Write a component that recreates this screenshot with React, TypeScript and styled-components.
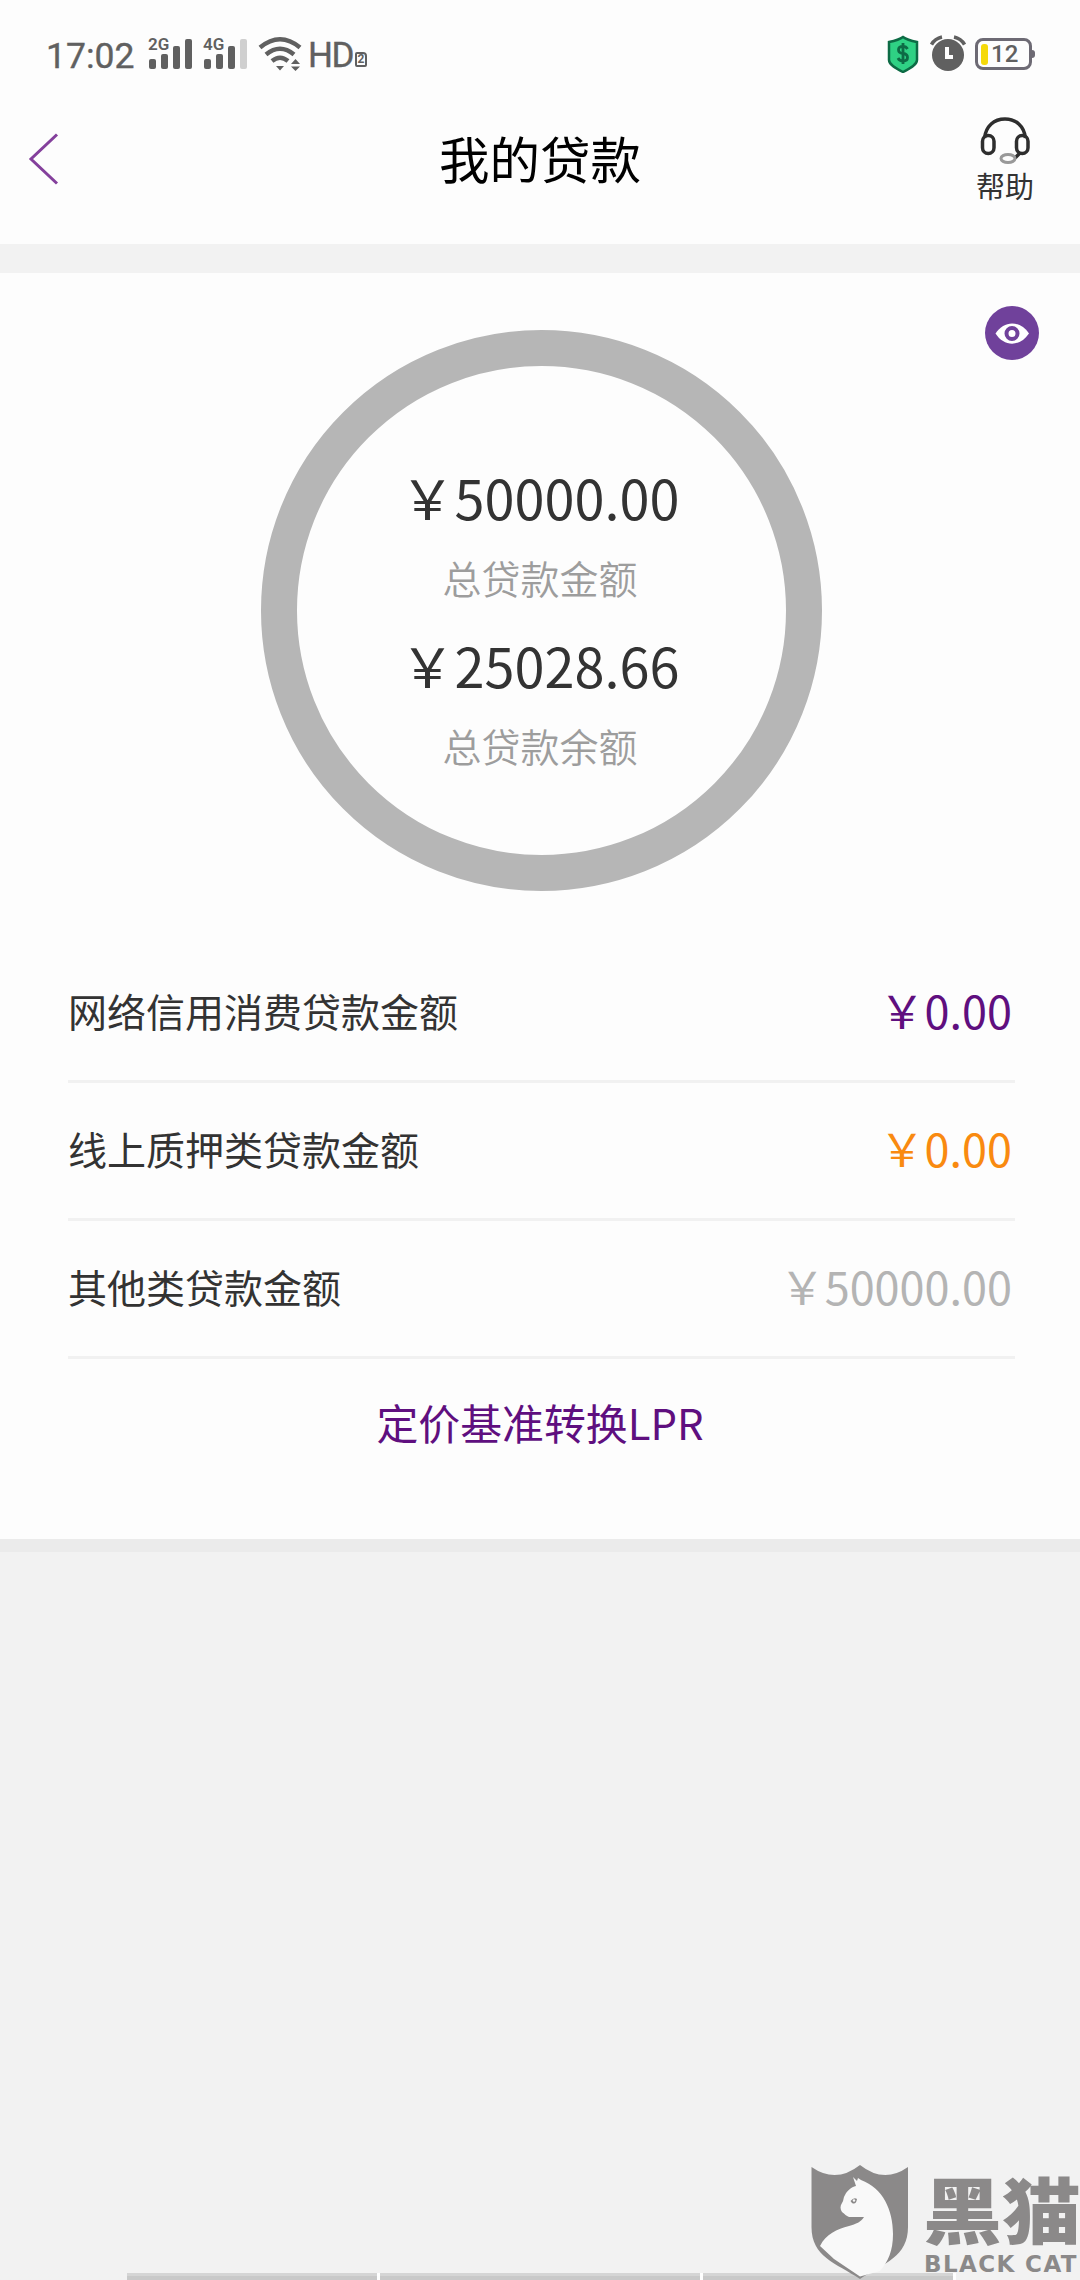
import React from "react";
import styled, { createGlobalStyle } from "styled-components";

const Global = createGlobalStyle`
  *, *::before, *::after { box-sizing: border-box; }
  body { margin: 0; background: #f2f2f2; }
`;

const Screen = styled.div`
  position: relative;
  display: flex;
  flex-direction: column;
  width: 1080px;
  height: 2280px;
  overflow: hidden;
  background: #f2f2f2;
  color: #333;
  font-family: "Noto Sans CJK SC", "Noto Sans", sans-serif;
`;

const StatusBar = styled.div`
  display: flex;
  justify-content: space-between;
  height: 110px;
  padding: 35px 44px 0 46px;
  background: #fdfdfd;
  color: #606060;
  font-family: Roboto, sans-serif;
`;

const StatusGroup = styled.div`
  display: flex;
  align-items: flex-start;
  height: 40px;
`;

const Clock = styled.span`
  width: 102px;
  font-size: 35.5px;
  line-height: 42px;
  -webkit-text-stroke: 0.4px #606060;
`;

const Signal = styled.div`
  display: flex;
  flex-direction: column;
  width: 55px;
  height: 36px;
`;

const Network = styled.span`
  height: 0;
  font-size: 17px;
  line-height: 19px;
  font-weight: 600;
`;

const Bars = styled.div`
  display: flex;
  align-items: flex-end;
  gap: 5px;
  height: 34px;
  padding-left: 1px;
`;

const Bar = styled.i<{ $h: number; $faint?: boolean }>`
  width: 7px;
  height: ${(p) => p.$h}px;
  border-radius: 2px;
  background: ${(p) => (p.$faint ? "#cfcfcf" : "#606060")};
`;

const WifiIcon = styled.svg`
  width: 44px;
  height: 38px;
`;

const VoiceTag = styled.span`
  margin-left: 6px;
  font-size: 35px;
  line-height: 41px;
  letter-spacing: -1.5px;
  -webkit-text-stroke: 0.4px #606060;
`;

const SimBadge = styled.span`
  display: flex;
  align-items: center;
  justify-content: center;
  width: 12px;
  height: 15px;
  margin: 17px 0 0 2px;
  border: 2px solid #606060;
  border-radius: 2px 4px 2px 2px;
  font-size: 12px;
  line-height: 11px;
  font-weight: 700;
`;

const ShieldIcon = styled.svg`
  width: 32px;
  height: 38px;
`;

const AlarmIcon = styled.svg`
  width: 36px;
  height: 38px;
  margin-left: 11px;
`;

const Battery = styled.div`
  position: relative;
  display: flex;
  align-items: center;
  gap: 3px;
  width: 57px;
  height: 32px;
  margin: 3px 4px 0 9px;
  padding-left: 3px;
  border: 3px solid #6d6a74;
  border-radius: 8px;
  font-size: 24px;
  line-height: 26px;
  font-weight: 500;

  &::after {
    content: "";
    position: absolute;
    right: -6px;
    top: 9px;
    width: 4px;
    height: 8px;
    border-radius: 0 3px 3px 0;
    background: #6d6a74;
  }
`;

const Charge = styled.i`
  width: 7px;
  height: 21px;
  border-radius: 3px;
  background: #f5d90a;
`;

const Header = styled.header`
  display: grid;
  grid-template-columns: 200px 1fr 200px;
  height: 134px;
  background: #fdfdfd;
`;

const BackIcon = styled.svg`
  width: 32px;
  height: 56px;
  margin: 21px 0 0 27px;
`;

const Title = styled.h1`
  margin: 10px 0 0;
  color: #000;
  font-size: 50.5px;
  line-height: 74px;
  font-weight: 400;
  text-align: center;
`;

const Help = styled.div`
  display: flex;
  flex-direction: column;
  align-items: center;
  justify-self: end;
  width: 60px;
  margin: 6px 45px 0 0;
  font-size: 29px;
  line-height: 39px;
  white-space: nowrap;
`;

const HeadsetIcon = styled.svg`
  width: 50px;
  height: 50px;
`;

const Card = styled.section`
  display: flex;
  flex-direction: column;
  height: 1266px;
  margin-top: 29px;
  padding: 33px 41px 0;
  background: #fdfdfd;
`;

const EyeButton = styled.svg`
  align-self: flex-end;
  width: 54px;
  height: 54px;
`;

const Ring = styled.div`
  align-self: center;
  display: flex;
  flex-direction: column;
  align-items: center;
  flex: none;
  width: 561px;
  height: 561px;
  margin: -30px 0 0 2px;
  padding-top: 89px;
  border: 36px solid #b6b6b6;
  border-radius: 50%;
`;

const Total = styled.div`
  height: 84px;
  margin-right: 2px;
  font-size: 54px;
  line-height: 84px;
`;

const TotalLabel = styled.div`
  height: 84px;
  margin-right: 2px;
  color: #9d9d9d;
  font-size: 39px;
  line-height: 76px;
  font-weight: 350;
`;

const List = styled.div`
  display: flex;
  flex-direction: column;
  margin: 54px 24px 0 27px;
`;

const Row = styled.div`
  display: flex;
  justify-content: space-between;
  align-items: center;
  height: 138px;
  padding: 0 3px 6px 0;
  border-bottom: 3px solid #f1f1f1;
  font-size: 39px;
`;

const Amount = styled.span<{ $color: string }>`
  color: ${(p) => p.$color};
  font-size: 45px;
`;

const RateLink = styled.a`
  align-self: center;
  margin-top: 33px;
  color: #5f0f7f;
  font-size: 41.9px;
  line-height: 60px;
`;

const CardShadow = styled.div`
  height: 13px;
  background: #ebebeb;
`;

const Dock = styled.div`
  display: flex;
  gap: 3px;
  height: 7px;
  margin: auto 0 0 127px;
`;

const DockItem = styled.i<{ $w: number }>`
  width: ${(p) => p.$w}px;
  border-top: 3px solid #d5d5d5;
  background: #c9c9c9;
  box-shadow: 3px 0 0 #fff;
`;

const Watermark = styled.div`
  position: absolute;
  right: 0;
  bottom: 0;
  display: flex;
  width: 270px;
  height: 116px;
  color: #8b8989;
`;

const CatIcon = styled.svg`
  flex: none;
  width: 100px;
  height: 116px;
`;

const Brand = styled.div`
  display: flex;
  flex-direction: column;
  margin-left: 13px;
  white-space: nowrap;
`;

const BrandName = styled.span`
  height: 87px;
  font-size: 79px;
  line-height: 86px;
  font-weight: 900;
  transform: scaleY(0.9);
`;

const BrandLatin = styled.span`
  margin-left: 1px;
  font-family: "DejaVu Sans", sans-serif;
  font-size: 23px;
  line-height: 26px;
  font-weight: 700;
  letter-spacing: 1.4px;
`;

const loans = [
  { label: "网络信用消费贷款金额", amount: "￥0.00", color: "#5f0f7f" },
  { label: "线上质押类贷款金额", amount: "￥0.00", color: "#f98a10" },
  { label: "其他类贷款金额", amount: "￥50000.00", color: "#b4b4b4" },
];

export default function App() {
  return (
    <Screen>
      <Global />
      <StatusBar>
        <StatusGroup>
          <Clock>17:02</Clock>
          <Signal>
            <Network>2G</Network>
            <Bars>
              <Bar $h={10} />
              <Bar $h={15} />
              <Bar $h={23} />
              <Bar $h={30} />
            </Bars>
          </Signal>
          <Signal>
            <Network>4G</Network>
            <Bars>
              <Bar $h={10} />
              <Bar $h={15} />
              <Bar $h={23} />
              <Bar $h={30} $faint />
            </Bars>
          </Signal>
          <WifiIcon viewBox="0 0 44 38" fill="none" stroke="#606060" strokeWidth="4.5">
            <path d="M2 12.5Q22-4 42 12.5" />
            <path d="M8 19.5Q22 8 36 19.5" />
            <path d="M14 26Q22 19.5 30 26" />
            <path d="M18 31h8l-4 4.5zM33 29l4.5-5 4.5 5zM33 31.500h9L37.500 36z" fill="#606060" stroke="none" />
          </WifiIcon>
          <VoiceTag>HD</VoiceTag>
          <SimBadge>2</SimBadge>
        </StatusGroup>
        <StatusGroup>
          <ShieldIcon viewBox="0 0 32 38">
            <path d="M16 2C20 5 25 6 30 7v18c0 5-8 9-14 12C10 34 2 30 2 25V7c5-1 10-2 14-5z" fill="#2fd184" stroke="#0d6b45" strokeWidth="2.500" />
            <path d="M20.500 14c-1-2-2.500-2.600-4.500-2.600-6 0-6 6.400 0 7.100 6 .7 6 7.500 0 7.500-2.500 0-4-1-5-3M16 8v21" fill="none" stroke="#0d6b45" strokeWidth="2.800" />
          </ShieldIcon>
          <AlarmIcon viewBox="0 0 36 38">
            <circle cx="18" cy="20" r="16" fill="#606060" />
            <path d="M1.500 9.500Q5 3.500 12 2M24 2q7 1.500 10.500 7.500" fill="none" stroke="#606060" strokeWidth="3.500" />
            <path d="M17 12v10h6" fill="none" stroke="#fdfdfd" strokeWidth="4" />
          </AlarmIcon>
          <Battery>
            <Charge />
            12
          </Battery>
        </StatusGroup>
      </StatusBar>

      <Header>
        <BackIcon viewBox="0 0 32 56" fill="none" stroke="#84409c" strokeWidth="3">
          <path d="M30 3.500L4 28l26 24.500" />
        </BackIcon>
        <Title>我的贷款</Title>
        <Help>
          <HeadsetIcon viewBox="0 0 50 50" fill="none" stroke="#2e2e2e" strokeWidth="3.500">
            <path d="M4.500 22C6 10 14 3 25 3s19 7 20.500 19" />
            <rect x="2.500" y="19.500" width="11.500" height="18" rx="5.700" />
            <rect x="36.500" y="19.500" width="11.500" height="18" rx="5.700" />
            <path d="M40 37l-5 5" />
            <ellipse cx="28" cy="42.500" rx="7" ry="4" stroke="#999" strokeWidth="3" />
          </HeadsetIcon>
          帮助
        </Help>
      </Header>

      <Card>
        <EyeButton viewBox="0 0 54 54">
          <circle cx="27" cy="27" r="27" fill="#70419b" />
          <path d="M10.500 27.500C19 14 35 14 44 27.500 35 41 19 41 10.500 27.500z" fill="#fff" />
          <circle cx="27" cy="27.500" r="5.500" fill="#fff" stroke="#70419b" strokeWidth="4" />
        </EyeButton>
        <Ring>
          <Total>￥50000.00</Total>
          <TotalLabel>总贷款金额</TotalLabel>
          <Total>￥25028.66</Total>
          <TotalLabel>总贷款余额</TotalLabel>
        </Ring>
        <List>
          {loans.map((loan) => (
            <Row key={loan.label}>
              <span>{loan.label}</span>
              <Amount $color={loan.color}>{loan.amount}</Amount>
            </Row>
          ))}
        </List>
        <RateLink>定价基准转换LPR</RateLink>
      </Card>
      <CardShadow />

      <Dock>
        <DockItem $w={250} />
        <DockItem $w={320} />
        <DockItem $w={250} />
      </Dock>

      <Watermark>
        <CatIcon viewBox="0 0 100 116">
          <path d="M1.500 3Q26 20 50 1q24 19 48 2v60c0 30-24 36-48 52C26 99 1.500 93 1.500 63z" fill="#8b8989" />
          <path d="M43 13l4 4 1-3 3 2c22 8 32 30 32 54 0 17-5 28-13 37L50 112.500 24 95 10 82c6-12 17-17 29-20 7-2 12-4 15-9H39c-3-1-4-3-7-5-2-3-2-6 0-9 2-3 1-5 3-8 2-4 6-8 11-9z" fill="#f9f9f9" />
          <path d="M40.500 37q3.500-4 6.500-2-1 6-5 4z" fill="#8b8989" />
          <circle cx="44" cy="36.500" r="1.200" fill="#f9f9f9" />
        </CatIcon>
        <Brand>
          <BrandName>黑猫</BrandName>
          <BrandLatin>BLACK CAT</BrandLatin>
        </Brand>
      </Watermark>
    </Screen>
  );
}
